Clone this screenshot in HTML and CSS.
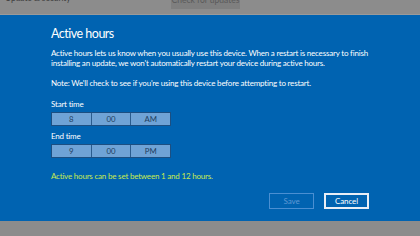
FILE: index.html
```html
<!DOCTYPE html>
<html>
<head>
<meta charset="utf-8">
<link rel="stylesheet" href="styles.css">
</head>
<body>
<div class="topbar">
  <div class="crumb">Update &amp; security</div>
  <div class="check">Check for updates</div>
</div>
<div class="dialog">
  <h1 class="title">Active hours</h1>
  <p class="desc">Active hours lets us know when you usually use this device. When a restart is necessary to finish<br>installing an update, we won't automatically restart your device during active hours.</p>
  <p class="note">Note: We'll check to see if you're using this device before attempting to restart.</p>
  <div class="label">Start time</div>
  <div class="picker"><span class="cell">8</span><span class="cell">00</span><span class="cell">AM</span></div>
  <div class="label label-end">End time</div>
  <div class="picker"><span class="cell">9</span><span class="cell">00</span><span class="cell">PM</span></div>
  <p class="hint">Active hours can be set between 1 and 12 hours.</p>
  <div class="actions">
    <div class="btn btn-save">Save</div>
    <div class="btn btn-cancel">Cancel</div>
  </div>
</div>
</body>
</html>
```
FILE: styles.css
```css
html, body {
  margin: 0;
  padding: 0;
}
body {
  width: 420px;
  height: 236px;
  overflow: hidden;
  background: #8c8c8c;
  font-family: Lato, "Noto Sans", sans-serif;
}
.topbar {
  height: 15px;
  display: flex;
  align-items: flex-start;
  overflow: hidden;
  border-bottom: 1px solid #9a9a9a;
  box-sizing: border-box;
}
.crumb {
  margin-top: -7px;
  margin-left: 5px;
  width: 166px;
  font-size: 8.5px;
  line-height: 10px;
  letter-spacing: -0.1px;
  color: #3e3e3e;
  white-space: nowrap;
}
.check {
  margin-top: -10px;
  width: 69px;
  height: 19px;
  background: #7f7f7f;
  color: #5a5a5a;
  font-size: 8.5px;
  line-height: 21px;
  text-align: center;
  white-space: nowrap;
}
.dialog {
  height: 206px;
  box-sizing: border-box;
  background: #0063b1;
  padding: 11px 0 0 51px;
  color: #ffffff;
}
.title {
  margin: 0;
  font-size: 12.5px;
  font-weight: 400;
  line-height: 16px;
  letter-spacing: -0.5px;
}
.desc, .note, .label, .hint {
  font-size: 8px;
  line-height: 10px;
  letter-spacing: -0.2px;
  white-space: nowrap;
}
.desc {
  margin: 6px 0 0;
}
.note {
  margin: 10px 0 0;
}
.label {
  margin-top: 11px;
}
.label-end {
  margin-top: 5px;
}
.picker {
  margin-top: 3px;
  display: flex;
  width: 120px;
  height: 14px;
  box-sizing: border-box;
  border: 1px solid #1c4f82;
  background: #6fa3d6;
}
.cell {
  flex: 1;
  text-align: center;
  font-size: 7.8px;
  line-height: 12px;
  color: #1e3d5e;
  border-left: 1px solid #2a5c8e;
}
.cell:first-child {
  border-left: none;
}
.hint {
  margin: 13px 0 0;
  color: #c8ea50;
}
.actions {
  margin-top: 12px;
  margin-left: 218px;
  display: flex;
  gap: 10px;
}
.btn {
  width: 45px;
  height: 16px;
  box-sizing: border-box;
  text-align: center;
  font-size: 8px;
  letter-spacing: -0.1px;
}
.btn-save {
  border: 1px solid #4a8fd2;
  color: #5f98d3;
  line-height: 14px;
}
.btn-cancel {
  border: 2px solid #e8eef6;
  color: #ffffff;
  line-height: 12px;
}
```
